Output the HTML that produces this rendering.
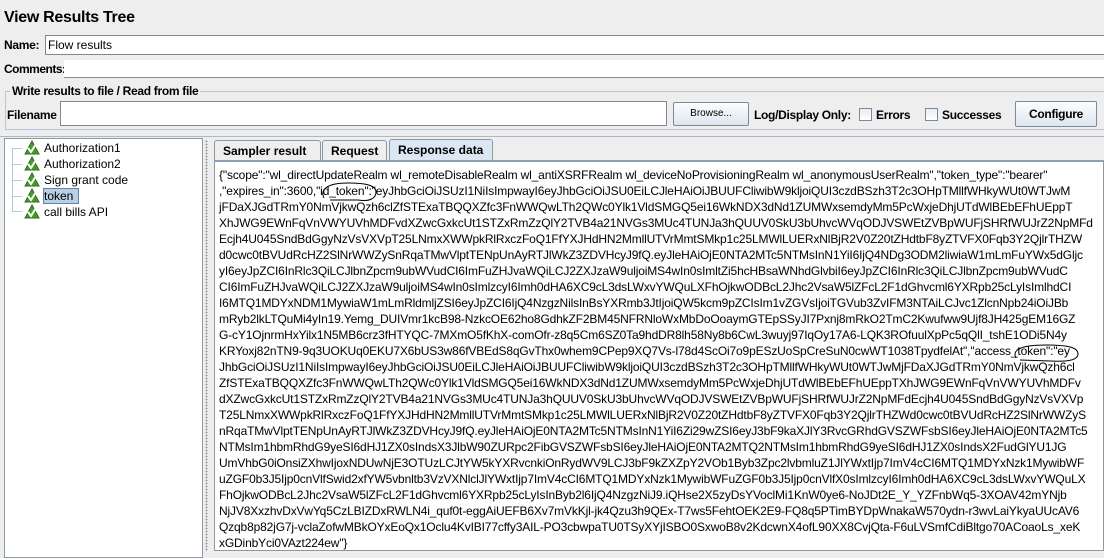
<!DOCTYPE html>
<html><head><meta charset="utf-8"><style>
body{margin:0;width:1104px;height:551px;background:#eeeeee;font-family:"Liberation Sans",Arial,sans-serif;overflow:hidden;position:relative;font-size:12px;color:#000}
.a{position:absolute}
.b{font-weight:bold;letter-spacing:-0.3px}
.inp{position:absolute;background:#fff;border:1px solid #7a8a99;box-sizing:border-box}
.btn{position:absolute;box-sizing:border-box;border:1px solid #7a8a99;background:linear-gradient(#fdfdfe,#dde6ef);text-align:center;border-radius:2px}
.cb{position:absolute;width:13px;height:13px;box-sizing:border-box;border:1px solid #7a8a99;background:linear-gradient(#e6edf5,#fff)}
.tr{position:absolute;left:44px;font-size:12px}
.tab{position:absolute;top:140px;height:20px;box-sizing:border-box;border:1px solid #8a99a6;border-bottom:none;background:#eeeeee;font-weight:bold;padding:3px 8px 0;border-radius:3px 3px 0 0}
#txt{position:absolute;left:219px;top:167px;font-size:12px;line-height:16px;white-space:nowrap;letter-spacing:-0.15px}
</style></head><body>
<div class="a b" style="left:4px;top:9px;font-size:16px">View Results Tree</div>
<div class="a b" style="left:4px;top:38px">Name:</div>
<div class="inp" style="left:45px;top:35px;width:1065px;height:20px;padding:2px 2px;">Flow results</div>
<div class="a b" style="left:4px;top:62px;letter-spacing:-0.5px">Comments:</div>
<div class="a" style="left:64px;top:60px;width:1040px;height:17px;background:#fff;border-bottom:1px solid #8a8a8a"></div>
<div class="a" style="left:5px;top:91px;width:1105px;height:37px;border:1px solid #b8c6d6;border-right:none"></div>
<div class="a b" style="left:10px;top:84px;background:#eeeeee;padding:0 2px">Write results to file / Read from file</div>
<div class="a b" style="left:7px;top:108px">Filename</div>
<div class="inp" style="left:60px;top:101px;width:607px;height:25px"></div>
<div class="btn" style="left:673px;top:102px;width:76px;height:24px;font-size:10px;line-height:22px">Browse...</div>
<div class="a b" style="left:754px;top:108px">Log/Display Only:</div>
<div class="cb" style="left:859px;top:108px"></div>
<div class="a b" style="left:876px;top:108px">Errors</div>
<div class="cb" style="left:925px;top:108px"></div>
<div class="a b" style="left:942px;top:108px">Successes</div>
<div class="btn b" style="left:1015px;top:101px;width:82px;height:26px;line-height:24px">Configure</div>
<div class="a" style="left:0;top:136px;width:1104px;border-top:1px solid #b0b8c0"></div>
<div class="a" style="left:4px;top:138px;width:199px;height:420px;background:#fff;border:1px solid #8a99a6;box-sizing:border-box"></div>
<div class="a" style="left:12px;top:148px;width:0;height:63px;border-left:1px solid #b8c8d8"></div>
<div class="a" style="left:12px;top:148px;width:10px;border-top:1px solid #b8c8d8"></div>
<div class="a" style="left:12px;top:164px;width:10px;border-top:1px solid #b8c8d8"></div>
<div class="a" style="left:12px;top:180px;width:10px;border-top:1px solid #b8c8d8"></div>
<div class="a" style="left:12px;top:196px;width:10px;border-top:1px solid #b8c8d8"></div>
<div class="a" style="left:12px;top:211px;width:10px;border-top:1px solid #b8c8d8"></div>
<svg class="a" style="left:24px;top:140px" width="16" height="80" viewBox="0 0 16 80">
<g id="t"><polygon points="8,1 15,14 1,14" fill="#4a9a2a" stroke="#2e6a18"/><path d="M4,8 L7,12 L12,4" stroke="#fff" stroke-width="2" fill="none"/></g>
<use href="#t" y="16"/><use href="#t" y="32"/><use href="#t" y="48"/><use href="#t" y="64"/></svg>
<div class="tr" style="top:141px">Authorization1</div>
<div class="tr" style="top:157px">Authorization2</div>
<div class="tr" style="top:173px">Sign grant code</div>
<div class="a" style="left:43px;top:188px;width:36px;height:16px;background:#b8cfe5;border:1px solid #6382a8;box-sizing:border-box"></div>
<div class="tr" style="top:189px">token</div>
<div class="tr" style="top:205px">call bills API</div>
<div class="a" style="left:205px;top:140px;width:3px;height:411px;background-image:radial-gradient(#999 0.8px,transparent 1px);background-size:3px 3px"></div>
<div class="tab" style="left:214px;width:107px">Sampler result</div>
<div class="tab" style="left:322px;width:65px">Request</div>
<div class="tab" style="left:389px;width:104px;background:#dce7f3;top:139px;height:21px">Response data</div>
<div class="a" style="left:214px;top:160px;width:890px;height:391px;background:#fff;border:1px solid #8a99a6;box-sizing:border-box;border-top:2px solid #8aa0b8"></div>
<div id="txt">
{"scope":"wl_directUpdateRealm wl_remoteDisableRealm wl_antiXSRFRealm wl_deviceNoProvisioningRealm wl_anonymousUserRealm","token_type":"bearer"<br>
,"expires_in":3600,"id_token":"eyJhbGciOiJSUzI1NiIsImpwayI6eyJhbGciOiJSU0EiLCJleHAiOiJBUUFCliwibW9kljoiQUI3czdBSzh3T2c3OHpTMllfWHkyWUt0WTJwM<br>
jFDaXJGdTRmY0NmVjkwQzh6clZfSTExaTBQQXZfc3FnWWQwLTh2QWc0Ylk1VldSMGQ5ei16WkNDX3dNd1ZUMWxsemdyMm5PcWxjeDhjUTdWlBEbEFhUEppT<br>
XhJWG9EWnFqVnVWYUVhMDFvdXZwcGxkcUt1STZxRmZzQlY2TVB4a21NVGs3MUc4TUNJa3hQUUV0SkU3bUhvcWVqODJVSWEtZVBpWUFjSHRfWUJrZ2NpMFd<br>
Ecjh4U045SndBdGgyNzVsVXVpT25LNmxXWWpkRlRxczFoQ1FfYXJHdHN2MmllUTVrMmtSMkp1c25LMWlLUERxNlBjR2V0Z20tZHdtbF8yZTVFX0Fqb3Y2QjlrTHZW<br>
d0cwc0tBVUdRcHZ2SlNrWWZySnRqaTMwVlptTENpUnAyRTJlWkZ3ZDVHcyJ9fQ.eyJleHAiOjE0NTA2MTc5NTMsInN1YiI6IjQ4NDg3ODM2liwiaW1mLmFuYWx5dGljc<br>
yI6eyJpZCI6InRlc3QiLCJlbnZpcm9ubWVudCI6ImFuZHJvaWQiLCJ2ZXJzaW9uljoiMS4wIn0sImltZi5hcHBsaWNhdGlvbiI6eyJpZCI6InRlc3QiLCJlbnZpcm9ubWVudC<br>
CI6ImFuZHJvaWQiLCJ2ZXJzaW9uljoiMS4wIn0sImlzcyI6Imh0dHA6XC9cL3dsLWxvYWQuLXFhOjkwODBcL2Jhc2VsaW5lZFcL2F1dGhvcml6YXRpb25cLyIsImlhdCI<br>
I6MTQ1MDYxNDM1MywiaW1mLmRldmljZSI6eyJpZCI6IjQ4NzgzNilsInBsYXRmb3JtIjoiQW5kcm9pZCIsIm1vZGVsIjoiTGVub3ZvIFM3NTAiLCJvc1ZlcnNpb24iOiJBb<br>
mRyb2lkLTQuMi4yIn19.Yemg_DUIVmr1kcB98-NzkcOE62ho8GdhkZF2BM45NFRNloWxMbDoOoaymGTEpSSyJI7Pxnj8mRkO2TmC2Kwufww9Ujf8JH425gEM16GZ<br>
G-cY1OjnrmHxYilx1N5MB6crz3fHTYQC-7MXmO5fKhX-comOfr-z8q5Cm6SZ0Ta9hdDR8lh58Ny8b6CwL3wuyj97IqOy17A6-LQK3ROfuulXpPc5qQlI_tshE1ODi5N4y<br>
KRYoxj82nTN9-9q3UOKUq0EKU7X6bUS3w86fVBEdS8qGvThx0whem9CPep9XQ7Vs-l78d4ScOi7o9pESzUoSpCreSuN0cwWT1038TpydfelAt","access_token":"ey<br>
JhbGciOiJSUzI1NiIsImpwayI6eyJhbGciOiJSU0EiLCJleHAiOiJBUUFCliwibW9kljoiQUI3czdBSzh3T2c3OHpTMllfWHkyWUt0WTJwMjFDaXJGdTRmY0NmVjkwQzh6cl<br>
ZfSTExaTBQQXZfc3FnWWQwLTh2QWc0Ylk1VldSMGQ5ei16WkNDX3dNd1ZUMWxsemdyMm5PcWxjeDhjUTdWlBEbEFhUEppTXhJWG9EWnFqVnVWYUVhMDFv<br>
dXZwcGxkcUt1STZxRmZzQlY2TVB4a21NVGs3MUc4TUNJa3hQUUV0SkU3bUhvcWVqODJVSWEtZVBpWUFjSHRfWUJrZ2NpMFdEcjh4U045SndBdGgyNzVsVXVp<br>
T25LNmxXWWpkRlRxczFoQ1FfYXJHdHN2MmllUTVrMmtSMkp1c25LMWlLUERxNlBjR2V0Z20tZHdtbF8yZTVFX0Fqb3Y2QjlrTHZWd0cwc0tBVUdRcHZ2SlNrWWZyS<br>
nRqaTMwVlptTENpUnAyRTJlWkZ3ZDVHcyJ9fQ.eyJleHAiOjE0NTA2MTc5NTMsInN1YiI6Zi29wZSI6eyJ3bF9kaXJlY3RvcGRhdGVSZWFsbSI6eyJleHAiOjE0NTA2MTc5<br>
NTMsIm1hbmRhdG9yeSI6dHJ1ZX0sIndsX3JlbW90ZURpc2FibGVSZWFsbSI6eyJleHAiOjE0NTA2MTQ2NTMsIm1hbmRhdG9yeSI6dHJ1ZX0sIndsX2FudGlYU1JG<br>
UmVhbG0iOnsiZXhwIjoxNDUwNjE3OTUzLCJtYW5kYXRvcnkiOnRydWV9LCJ3bF9kZXZpY2VOb1Byb3Zpc2lvbmluZ1JlYWxtIjp7ImV4cCI6MTQ1MDYxNzk1MywibWF<br>
uZGF0b3J5Ijp0cnVlfSwid2xfYW5vbnltb3VzVXNlclJlYWxtIjp7ImV4cCI6MTQ1MDYxNzk1MywibWFuZGF0b3J5Ijp0cnVlfX0sImlzcyI6Imh0dHA6XC9cL3dsLWxvYWQuLX<br>
FhOjkwODBcL2Jhc2VsaW5lZFcL2F1dGhvcml6YXRpb25cLyIsInByb2l6IjQ4NzgzNiJ9.iQHse2X5zyDsYVoclMi1KnW0ye6-NoJDt2E_Y_YZFnbWq5-3XOAV42mYNjb<br>
NjJV8XxzhvDxVwYq5CzLBIZDxRWLN4i_quf0t-eggAiUEFB6Xv7mVkKjl-jk4Qzu3h9QEx-T7ws5FehtOEK2E9-FQ8q5PTimBYDpWnakaW570ydn-r3wvLaiYkyaUUcAV6<br>
Qzqb8p82jG7j-vclaZofwMBkOYxEoQx1Oclu4KvIBI77cffy3AIL-PO3cbwpaTU0TSyXYjISBO0SxwoB8v2KdcwnX4ofL90XX8CvjQta-F6uLVSmfCdiBltgo70ACoaoLs_xeK<br>
xGDinbYci0VAzt224ew"}
</div>
<svg class="a" style="left:318px;top:180px" width="64" height="24"><path d="M6,18 C2,10 8,3 30,3 C50,3 58,6 58,12 C58,18 52,22 40,20 L12,20" fill="none" stroke="#000" stroke-width="1"/></svg>
<svg class="a" style="left:1010px;top:342px" width="72" height="22"><path d="M6,16 C2,8 10,3 36,3 C60,3 68,6 68,12 C68,18 58,20 40,19 L10,18" fill="none" stroke="#000" stroke-width="1"/></svg>
</body></html>
